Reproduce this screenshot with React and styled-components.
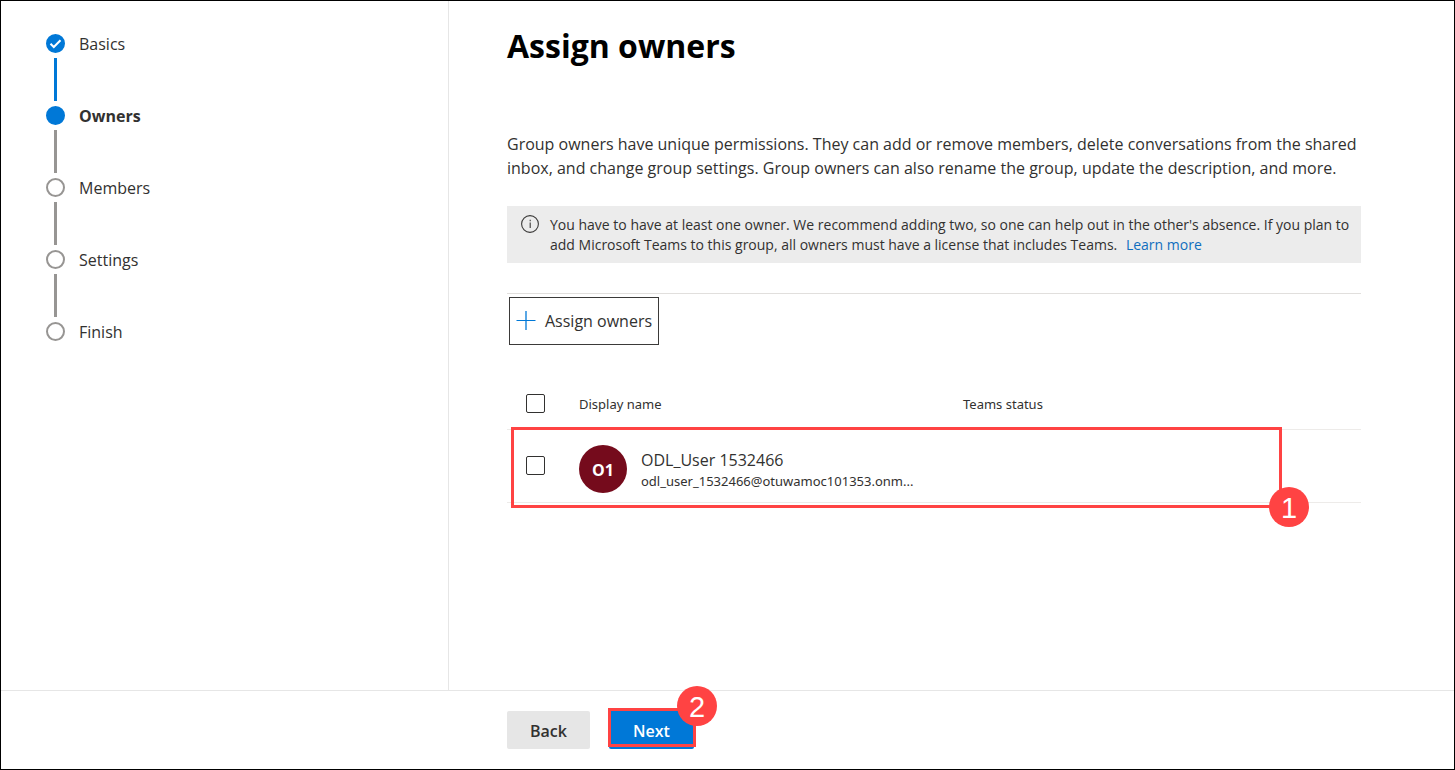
import React from "react";
import styled, { createGlobalStyle, css } from "styled-components";

const GlobalStyle = createGlobalStyle`
  *, *::before, *::after { box-sizing: border-box; }
  body {
    margin: 0;
    background: #fff;
    color: #323130;
    font-family: "Open Sans", "Noto Sans", sans-serif;
    font-size: 16px;
    font-weight: 400;
    line-height: 24px;
  }
  button, input { font: inherit; color: inherit; }
`;

const Page = styled.div`
  display: flex;
  flex-direction: column;
  min-height: 100vh;
  border: 1px solid #000;
`;

const Body = styled.div`
  display: flex;
  flex: 1;
`;

const Sidebar = styled.nav`
  flex: 0 0 448px;
  padding: 33px 45px;
  border-right: 1px solid #e6e6e6;
`;

const Steps = styled.ol`
  list-style: none;
  margin: 0;
  padding: 0;
  display: flex;
  flex-direction: column;
  gap: 5px;
`;

const Step = styled.li`
  display: flex;
  align-items: flex-start;
  gap: 14px;
`;

const Track = styled.span`
  display: flex;
  flex-direction: column;
  align-items: center;
  gap: 5px;
  width: 19px;
`;

const Dot = styled.span`
  display: grid;
  place-items: center;
  width: 19px;
  height: 19px;
  border-radius: 50%;
  border: 2px solid #979593;
  ${(p) => p.$filled && css`
    border-color: #0078d7;
    background: #0078d7;
  `}
`;

const Connector = styled.span`
  width: 3px;
  height: 43px;
  background: ${(p) => (p.$done ? "#0078d7" : "#979593")};
`;

const StepLabel = styled.span`
  line-height: 20px;
  ${(p) => p.$current && "font-weight: 700;"}
`;

const Content = styled.main`
  flex: 1;
  min-width: 0;
  padding: 21px 93px 24px 58px;
`;

const Title = styled.h1`
  margin: 0 0 62px;
  color: #000;
  font-size: 32px;
  font-weight: 700;
  line-height: 48px;
`;

const Intro = styled.p`
  margin: 0 0 26px;
`;

const Notice = styled.div`
  display: flex;
  gap: 10px;
  padding: 9px 8px 8px 14px;
  margin-bottom: 30px;
  background: #ececec;
  font-size: 14px;
  line-height: 20px;

  svg { flex: none; }
`;

const NoticeText = styled.p`
  margin: 0;
`;

const NoticeLink = styled.a`
  display: inline-block;
  margin-left: 5px;
  color: #106ebe;
  text-decoration: none;
`;

const Toolbar = styled.div`
  padding: 3px 2px;
  border-top: 1px solid #e1dfdd;
`;

const AssignButton = styled.button`
  display: flex;
  align-items: center;
  gap: 9px;
  height: 48px;
  padding: 0 6px;
  border: 1px solid #3b3a39;
  background: #fff;
  white-space: nowrap;
`;

const OwnersArea = styled.div`
  position: relative;
  margin-top: 30px;
`;

const OwnersTable = styled.table`
  width: 100%;
  border-collapse: collapse;
  table-layout: fixed;
`;

const Row = styled.tr`
  height: ${(p) => (p.$head ? 51 : 73)}px;
  border-bottom: 1px solid #edebe9;
`;

const cell = css`
  padding: 0;
  text-align: left;
  vertical-align: middle;
`;

const HeadCell = styled.th`
  ${cell}
  width: ${(p) => p.$width || "auto"};
  padding-top: ${(p) => (p.$width === "72px" ? 0 : 2)}px;
  font-family: "Noto Sans", "Open Sans", sans-serif;
  font-size: 13px;
  font-weight: 400;
`;

const Cell = styled.td`
  ${cell}
`;

const Checkbox = styled.input.attrs({ type: "checkbox" })`
  appearance: none;
  display: block;
  width: 19px;
  height: 19px;
  margin: 0 0 0 19px;
  border: 1px solid #323130;
  border-radius: 2px;
  background: #fff;

  &:checked { background: #0078d7; }
`;

const Person = styled.div`
  display: flex;
  align-items: center;
  gap: 14px;
  padding-top: 6px;
`;

const Avatar = styled.span`
  flex: none;
  width: 48px;
  height: 48px;
  border-radius: 50%;
  background: #750b1c;
  color: #fff;
  font-weight: 700;
  line-height: 50px;
  text-align: center;
`;

const PersonText = styled.div`
  padding-top: 2px;
`;

const PersonName = styled.div`
  line-height: 22px;
`;

const PersonMail = styled.div`
  font-family: "Noto Sans", "Open Sans", sans-serif;
  font-size: 13px;
  line-height: 20px;
  white-space: nowrap;
`;

const Footer = styled.footer`
  display: flex;
  gap: 19px;
  padding: 20px 58px 20px 506px;
  border-top: 1px solid #e6e6e6;
`;

const FooterButton = styled.button`
  height: 38px;
  width: ${(p) => (p.$primary ? 85 : 83)}px;
  padding: 2px 0 0;
  border: 0;
  border-radius: 2px;
  background: ${(p) => (p.$primary ? "#0078d7" : "#e6e6e6")};
  color: ${(p) => (p.$primary ? "#fff" : "#323130")};
  font-weight: 600;
`;

const Marked = styled.div`
  position: relative;
`;

const Highlight = styled.div`
  position: absolute;
  border: 3px solid #ff4343;
  pointer-events: none;
`;

const RowHighlight = styled(Highlight)`
  left: 4px;
  right: 79px;
  top: 49px;
  bottom: -5px;
`;

const ButtonHighlight = styled(Highlight)`
  left: -1px;
  right: -2px;
  top: -3px;
  bottom: 2px;
`;

const Marker = styled.span`
  position: absolute;
  right: ${(p) => (p.$row ? -30 : -24)}px;
  ${(p) => (p.$row ? "bottom: -22px;" : "top: -25px;")}
  width: 40px;
  height: 40px;
  border-radius: 50%;
  background: #ff4343;
  color: #fff;
  font-family: "Liberation Sans", Arial, sans-serif;
  font-size: 29px;
  line-height: 42px;
  text-align: center;
`;

const CheckIcon = () => (
  <svg width="13" height="13" viewBox="0 0 13 13" fill="none" stroke="#fff" strokeWidth="2" aria-hidden="true">
    <path d="M1.5 6.8 4.8 10 11.5 3.2" />
  </svg>
);

const InfoIcon = () => (
  <svg width="19" height="19" viewBox="0 0 19 19" fill="none" stroke="#3b3a39" aria-hidden="true">
    <circle cx="9" cy="9" r="8.4" strokeWidth="1.1" />
    <path d="M9.2 7.5v5.5M9.2 4.8v1.4" strokeWidth="1.1" />
  </svg>
);

const PlusIcon = () => (
  <svg width="20" height="20" viewBox="0 0 20 20" fill="none" stroke="#0078d7" aria-hidden="true">
    <path d="M.5 9.5h19" strokeWidth="1" />
    <path d="M10 0v19" strokeWidth="1.3" />
  </svg>
);

const steps = [
  { label: "Basics", done: true },
  { label: "Owners", current: true },
  { label: "Members" },
  { label: "Settings" },
  { label: "Finish" },
];

export default function App() {
  return (
    <Page>
      <GlobalStyle />
      <Body>
        <Sidebar aria-label="Progress">
          <Steps>
            {steps.map((step, i) => (
              <Step key={step.label} aria-current={step.current ? "step" : undefined}>
                <Track>
                  <Dot $filled={step.done || step.current}>{step.done && <CheckIcon />}</Dot>
                  {i < steps.length - 1 && <Connector $done={step.done} />}
                </Track>
                <StepLabel $current={step.current}>{step.label}</StepLabel>
              </Step>
            ))}
          </Steps>
        </Sidebar>
        <Content>
          <Title>Assign owners</Title>
          <Intro>
            Group owners have unique permissions. They can add or remove members, delete conversations from the shared
            inbox, and change group settings. Group owners can also rename the group, update the description, and more.
          </Intro>
          <Notice>
            <InfoIcon />
            <NoticeText>
              You have to have at least one owner. We recommend adding two, so one can help out in the other's absence.
              If you plan to
              <br />
              add Microsoft Teams to this group, all owners must have a license that includes Teams.{" "}
              <NoticeLink href="#learn-more">Learn more</NoticeLink>
            </NoticeText>
          </Notice>
          <Toolbar>
            <AssignButton type="button">
              <PlusIcon />
              Assign owners
            </AssignButton>
          </Toolbar>
          <OwnersArea>
            <OwnersTable>
              <thead>
                <Row $head>
                  <HeadCell $width="72px"><Checkbox aria-label="Select all owners" /></HeadCell>
                  <HeadCell $width="384px">Display name</HeadCell>
                  <HeadCell>Teams status</HeadCell>
                </Row>
              </thead>
              <tbody>
                <Row>
                  <Cell><Checkbox aria-label="Select ODL_User 1532466" /></Cell>
                  <Cell>
                    <Person>
                      <Avatar>O1</Avatar>
                      <PersonText>
                        <PersonName>ODL_User 1532466</PersonName>
                        <PersonMail>odl_user_1532466@otuwamoc101353.onm...</PersonMail>
                      </PersonText>
                    </Person>
                  </Cell>
                  <Cell />
                </Row>
              </tbody>
            </OwnersTable>
            <RowHighlight>
              <Marker $row>1</Marker>
            </RowHighlight>
          </OwnersArea>
        </Content>
      </Body>
      <Footer>
        <FooterButton type="button">Back</FooterButton>
        <Marked>
          <FooterButton type="button" $primary>Next</FooterButton>
          <ButtonHighlight>
            <Marker>2</Marker>
          </ButtonHighlight>
        </Marked>
      </Footer>
    </Page>
  );
}
